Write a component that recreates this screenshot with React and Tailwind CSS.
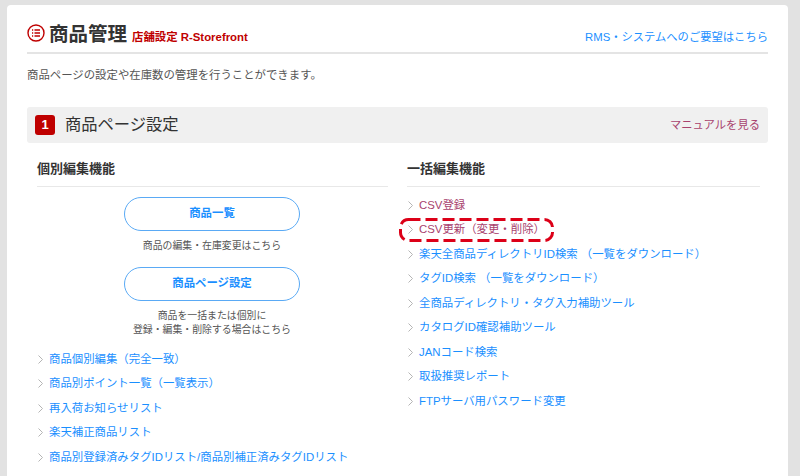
import React from "react";

const FONT = "font-['Liberation_Sans','Noto_Sans_CJK_JP',sans-serif]";

const leftLinks = [
  "商品個別編集（完全一致）",
  "商品別ポイント一覧（一覧表示）",
  "再入荷お知らせリスト",
  "楽天補正商品リスト",
  "商品別登録済みタグIDリスト/商品別補正済みタグIDリスト",
];

const rightLinks = [
  { label: "CSV登録", visited: true },
  { label: "CSV更新（変更・削除）", visited: true, marked: true },
  { label: "楽天全商品ディレクトリID検索 （一覧をダウンロード）" },
  { label: "タグID検索 （一覧をダウンロード）" },
  { label: "全商品ディレクトリ・タグ入力補助ツール" },
  { label: "カタログID確認補助ツール" },
  { label: "JANコード検索" },
  { label: "取扱推奨レポート" },
  { label: "FTPサーバ用パスワード変更" },
];

function Chevron() {
  return (
    <svg width="5" height="9" viewBox="0 0 5 9" fill="none" className="shrink-0">
      <path d="M0.5 0.5L4.5 4.5L0.5 8.5" stroke="#b5b5b5" strokeWidth="1" />
    </svg>
  );
}

function LinkRow({ label, visited, marked }) {
  return (
    <li className="relative flex h-[24.5px] items-center gap-[6px] pl-[1px]">
      <Chevron />
      <a className={visited ? "text-[#a8426e]" : "text-[#1a8fff]"}>{label}</a>
      {marked && (
        <svg width="155" height="24" viewBox="0 0 155 24" fill="none" className="absolute left-[-8px] top-0">
          <rect x="1.5" y="1.5" width="152" height="21" rx="8" stroke="#dc0018" strokeWidth="3" strokeDasharray="12 5" />
        </svg>
      )}
    </li>
  );
}

function PillButton({ children }) {
  return (
    <a className="flex h-[34px] w-[176px] items-center justify-center rounded-full border border-[#5aaaf5] text-[11.4px] font-bold text-[#1a8fff]">
      {children}
    </a>
  );
}

export default function App() {
  return (
    <div className={`${FONT} h-[476px] w-[800px] overflow-hidden bg-[#e2e2e2] pl-[7px] pr-[12px] pt-[5px]`}>
      <div className="h-[480px] rounded-[4px] bg-white px-[20px] pt-[15px]">
        {/* title */}
        <div className="flex h-[34px] items-center border-b-2 border-[#e4e4e4] pb-[2px]">
          <svg width="18" height="18" viewBox="0 0 18 18" fill="none" className="mb-[4px]">
            <circle cx="9" cy="9" r="8" stroke="#bf0000" strokeWidth="1.4" />
            <path d="M7.5 6H13M7.5 9H13M7.5 12H13" stroke="#bf0000" strokeWidth="1.4" />
            <path d="M5 6H6.2M5 9H6.2M5 12H6.2" stroke="#bf0000" strokeWidth="1.4" />
          </svg>
          <h1 className="ml-[4px] text-[19.5px] font-bold leading-none text-[#333]">商品管理</h1>
          <span className="ml-[5px] mt-[5px] text-[11.4px] font-bold text-[#bf0000]">店舗設定 R-Storefront</span>
          <a className="ml-auto mt-[5px] text-[11.3px] text-[#1a8fff]">RMS・システムへのご要望はこちら</a>
        </div>

        <p className="mt-[12px] text-[11.4px] leading-[18px] text-[#555]">商品ページの設定や在庫数の管理を行うことができます。</p>

        {/* section header */}
        <div className="mt-[23px] flex h-[36px] items-center rounded-[3px] bg-[#f0f0f0] pl-[8px] pr-[8px]">
          <span className="flex h-[20px] w-[20px] items-center justify-center rounded-[3px] bg-[#bf0000] text-[13px] font-bold text-white">1</span>
          <h2 className="mb-[2px] ml-[10px] text-[16.3px] text-[#333]">商品ページ設定</h2>
          <a className="ml-auto text-[11.3px] text-[#a8426e]">マニュアルを見る</a>
        </div>

        <div className="mt-[16px] flex text-[11.4px]">
          {/* left column */}
          <div className="ml-[10px] w-[351px]">
            <h3 className="h-[28px] border-b border-[#e8e8e8] text-[13px] font-bold leading-[20px] text-[#333]">個別編集機能</h3>
            <div className="mt-[10px] flex flex-col items-center pr-[1px]">
              <PillButton>商品一覧</PillButton>
              <p className="mt-[8px] text-[9.9px] leading-[14px] text-[#555]">商品の編集・在庫変更はこちら</p>
              <div className="mt-[14px]">
                <PillButton>商品ページ設定</PillButton>
              </div>
              <p className="mt-[8px] text-center text-[9.9px] leading-[14px] text-[#555]">
                商品を一括または個別に
                <br />
                登録・編集・削除する場合はこちら
              </p>
            </div>
            <ul className="mt-[10px]">
              {leftLinks.map((label) => (
                <LinkRow key={label} label={label} />
              ))}
            </ul>
          </div>

          {/* right column */}
          <div className="ml-[19px] w-[353px]">
            <h3 className="h-[28px] border-b border-[#e8e8e8] text-[13px] font-bold leading-[20px] text-[#333]">一括編集機能</h3>
            <ul className="mt-[6px]">
              {rightLinks.map((link) => (
                <LinkRow key={link.label} {...link} />
              ))}
            </ul>
          </div>
        </div>
      </div>
    </div>
  );
}
